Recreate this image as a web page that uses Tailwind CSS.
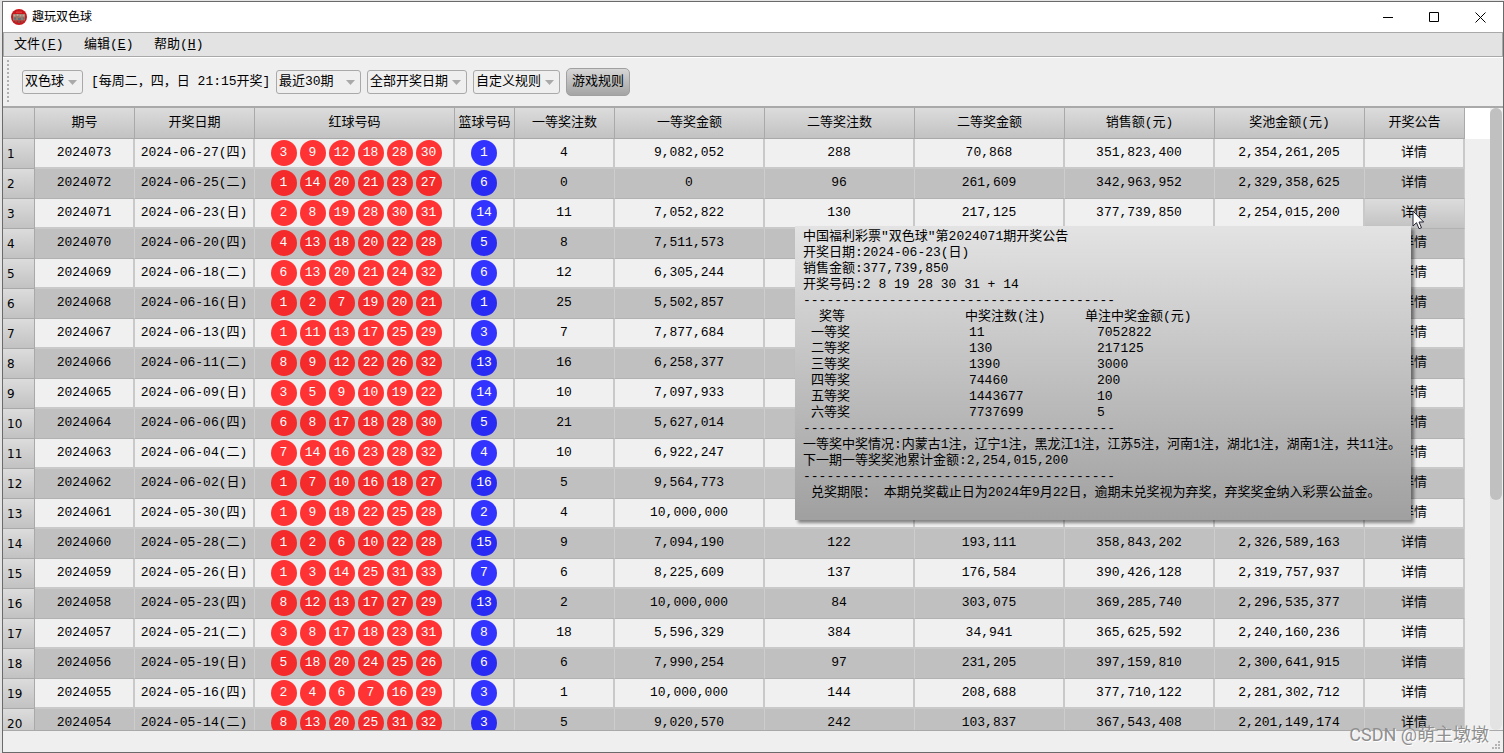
<!DOCTYPE html>
<html lang="zh-CN">
<head>
<meta charset="utf-8">
<title>趣玩双色球</title>
<script src="https://cdn.jsdelivr.net/npm/@tailwindcss/browser@4"></script>
</head>
<body class="h-screen overflow-hidden bg-[#e4e4e4] pt-px pl-0.5 text-[13px] leading-4 text-black font-['Liberation_Mono','Noto_Sans_CJK_SC',monospace]">
<div class="relative flex h-full flex-col border border-[#6a6a6a] bg-[#efefef]">

  <header class="flex h-[30px] shrink-0 items-center bg-white pl-2">
    <svg class="size-4" viewBox="0 0 16 16" aria-hidden="true">
      <circle cx="8" cy="8" r="8" fill="#c9181d"/>
      <path d="M2 5h12v6.500H2z" fill="#97796b"/>
      <path d="M2.500 5.500h2v2h-2zM5.500 5h2v2h-2zM8.500 5.500h2v2h-2zM11.500 5.500h2v2h-2z" fill="#b9a797"/>
      <path d="M3 8.500h2v2H3zM7 9h3v2H7zM12 8.500h1.500v2H12z" fill="#5f7076"/>
      <path d="M4 12h2v1.500H4zM7 12h2v2H7zM10 12h2v1.500h-2z" fill="#8d4a42"/>
      <path d="M5 2.500h6v1.500H5z" fill="#e0393a"/>
    </svg>
    <h1 class="ml-[5px] flex-1 text-xs font-['Liberation_Sans','Noto_Sans_CJK_SC',sans-serif]">趣玩双色球</h1>
    <button aria-label="最小化" class="flex h-full w-[46px] items-center justify-center"><svg width="11" height="11" viewBox="0 0 11 11"><path d="M0 5.500h10" stroke="#000"/></svg></button>
    <button aria-label="最大化" class="flex h-full w-[46px] items-center justify-center"><svg width="11" height="11" viewBox="0 0 11 11"><path d="M.5.5h9v9h-9z" fill="none" stroke="#000"/></svg></button>
    <button aria-label="关闭" class="flex h-full w-[46px] items-center justify-center"><svg width="11" height="11" viewBox="0 0 11 11"><path d="M.5.5l10 10M10.500.5l-10 10" stroke="#000"/></svg></button>
  </header>

  <nav class="flex h-[25px] shrink-0 items-center gap-5 border border-[#a9a9a9] bg-[#e3e3e3] pl-2.5">
    <button class="w-[50px] text-left whitespace-nowrap">文件(<u>F</u>)</button>
    <button class="w-[50px] text-left whitespace-nowrap">编辑(<u>E</u>)</button>
    <button class="w-[50px] text-left whitespace-nowrap">帮助(<u>H</u>)</button>
  </nav>

  <div class="flex h-[49px] shrink-0 items-center border-t border-white pl-1">
    <svg class="mr-[13px]" width="2" height="44" aria-hidden="true"><path d="M1 0v44" stroke="#b0b0b0" stroke-width="2" stroke-dasharray="2 2"/></svg>
    <div class="relative mr-2 w-[61px]">
      <select aria-label="彩种" class="h-6 w-full appearance-none rounded-[3px] border border-[#a9a9a9] bg-[#efefef] pl-0.5"><option>双色球</option></select>
      <svg class="pointer-events-none absolute top-2.5 right-1.5" width="9" height="5" viewBox="0 0 9 5"><path d="M0 0h9L4.500 5z" fill="#a9a9a9"/></svg>
    </div>
    <span class="mr-2 w-[177px] whitespace-nowrap">[每周二，四，日 21:15开奖]</span>
    <div class="relative mr-1.5 w-[85px]">
      <select aria-label="期数" class="h-6 w-full appearance-none rounded-[3px] border border-[#a9a9a9] bg-[#efefef] pl-0.5"><option>最近30期</option></select>
      <svg class="pointer-events-none absolute top-2.5 right-1.5" width="9" height="5" viewBox="0 0 9 5"><path d="M0 0h9L4.500 5z" fill="#a9a9a9"/></svg>
    </div>
    <div class="relative mr-1.5 w-[100px]">
      <select aria-label="开奖日期" class="h-6 w-full appearance-none rounded-[3px] border border-[#a9a9a9] bg-[#efefef] pl-0.5"><option>全部开奖日期</option></select>
      <svg class="pointer-events-none absolute top-2.5 right-1.5" width="9" height="5" viewBox="0 0 9 5"><path d="M0 0h9L4.500 5z" fill="#a9a9a9"/></svg>
    </div>
    <div class="relative mr-1.5 w-[87px]">
      <select aria-label="规则" class="h-6 w-full appearance-none rounded-[3px] border border-[#a9a9a9] bg-[#efefef] pl-0.5"><option>自定义规则</option></select>
      <svg class="pointer-events-none absolute top-2.5 right-1.5" width="9" height="5" viewBox="0 0 9 5"><path d="M0 0h9L4.500 5z" fill="#a9a9a9"/></svg>
    </div>
    <button class="h-7 w-16 rounded-[5px] border border-[#a0a0a0] bg-linear-to-b from-[#d6d6d6] to-[#a4a4a4]">游戏规则</button>
  </div>

  <main class="flex min-h-0 flex-1 border-t-2 border-b border-[#a9a9a9]">
    <div class="min-w-0 flex-1 overflow-hidden">
      <div class="bg-linear-to-b from-white from-[31px] to-[#efefef] to-[31px]">
      <table class="w-[1461px] table-fixed border-separate border-spacing-0 text-center whitespace-nowrap">
        <colgroup><col class="w-8"><col class="w-[100px]"><col class="w-[120px]"><col class="w-[200px]"><col class="w-[60px]"><col class="w-[100px]"><col class="w-[150px]"><col class="w-[150px]"><col class="w-[150px]"><col class="w-[150px]"><col class="w-[150px]"><col class="w-[100px]"></colgroup>
        <thead><tr id="head" class="h-[31px]"></tr></thead>
        <tbody id="rows"></tbody>
      </table>
      </div>
    </div>
    <div class="w-3 shrink-0 rounded-md bg-[#e3e3e3]"><div class="h-[63%] rounded-md bg-[#c0c0c0]"></div></div>
    <div class="w-px shrink-0 bg-[#efefef]"></div>
  </main>

  <footer class="flex h-[21px] shrink-0 items-end justify-end pr-0.5 pb-0.5">
    <svg width="9" height="9" viewBox="0 0 9 9" fill="#b4b4b4" aria-hidden="true"><path d="M6 0h2v2H6zM3 3h2v2H3zM6 3h2v2H6zM0 6h2v2H0zM3 6h2v2H3zM6 6h2v2H6z"/></svg>
  </footer>

  <section role="tooltip" class="absolute top-[224px] left-[792px] w-[616px] bg-linear-to-b from-[#e3e3e3] to-[#a0a0a0] px-2 pt-[3px] pb-[19px] whitespace-nowrap shadow-[3px_3px_3px_rgba(0,0,0,0.45)]">
    <p>中国福利彩票"双色球"第2024071期开奖公告</p>
    <p>开奖日期:2024-06-23(日)</p>
    <p>销售金额:377,739,850</p>
    <p>开奖号码:2 8 19 28 30 31 + 14</p>
    <p>----------------------------------------</p>
    <table class="w-[400px] table-fixed border-separate border-spacing-0 text-left">
      <colgroup><col class="w-[158px]"><col class="w-32"><col></colgroup>
      <thead><tr><th class="p-0 pl-4 font-normal">奖等</th><th class="p-0 pl-1 font-normal">中奖注数(注)</th><th class="p-0 font-normal"><span class="-ml-1">单注中奖金额(元)</span></th></tr></thead>
      <tbody id="prizes"></tbody>
    </table>
    <p>----------------------------------------</p>
    <p>一等奖中奖情况:内蒙古1注，辽宁1注，黑龙江1注，江苏5注，河南1注，湖北1注，湖南1注，共11注。</p>
    <p>下一期一等奖奖池累计金额:2,254,015,200</p>
    <p>----------------------------------------</p>
    <p class="pl-2">兑奖期限： 本期兑奖截止日为2024年9月22日，逾期未兑奖视为弃奖，弃奖奖金纳入彩票公益金。</p>
  </section>

  <svg class="absolute top-[208px] left-[1409px]" width="13" height="20" viewBox="0 0 13 20" aria-hidden="true"><path d="M1 1v15l3.500-3.300 2.500 6 2.500-1-2.500-5.700h4.700z" fill="#fff" stroke="#222232"/></svg>

  <div class="absolute right-3.5 bottom-[3px] text-lg whitespace-nowrap text-[#8f8f8f] [text-shadow:1px_1px_0_#fff] font-['Roboto','Noto_Sans_CJK_SC',sans-serif]">CSDN @萌主墩墩</div>
</div>

<script>
const heads = ['', '期号', '开奖日期', '红球号码', '篮球号码', '一等奖注数', '一等奖金额', '二等奖注数', '二等奖金额', '销售额(元)', '奖池金额(元)', '开奖公告'];
const draws = [
 ['2024073','2024-06-27(四)','3 9 12 18 28 30','1','4','9,082,052','288','70,868','351,823,400','2,354,261,205'],
 ['2024072','2024-06-25(二)','1 14 20 21 23 27','6','0','0','96','261,609','342,963,952','2,329,358,625'],
 ['2024071','2024-06-23(日)','2 8 19 28 30 31','14','11','7,052,822','130','217,125','377,739,850','2,254,015,200'],
 ['2024070','2024-06-20(四)','4 13 18 20 22 28','5','8','7,511,573','','','',''],
 ['2024069','2024-06-18(二)','6 13 20 21 24 32','6','12','6,305,244','','','',''],
 ['2024068','2024-06-16(日)','1 2 7 19 20 21','1','25','5,502,857','','','',''],
 ['2024067','2024-06-13(四)','1 11 13 17 25 29','3','7','7,877,684','','','',''],
 ['2024066','2024-06-11(二)','8 9 12 22 26 32','13','16','6,258,377','','','',''],
 ['2024065','2024-06-09(日)','3 5 9 10 19 22','14','10','7,097,933','','','',''],
 ['2024064','2024-06-06(四)','6 8 17 18 28 30','5','21','5,627,014','','','',''],
 ['2024063','2024-06-04(二)','7 14 16 23 28 32','4','10','6,922,247','','','',''],
 ['2024062','2024-06-02(日)','1 7 10 16 18 27','16','5','9,564,773','','','',''],
 ['2024061','2024-05-30(四)','1 9 18 22 25 28','2','4','10,000,000','','','',''],
 ['2024060','2024-05-28(二)','1 2 6 10 22 28','15','9','7,094,190','122','193,111','358,843,202','2,326,589,163'],
 ['2024059','2024-05-26(日)','1 3 14 25 31 33','7','6','8,225,609','137','176,584','390,426,128','2,319,757,937'],
 ['2024058','2024-05-23(四)','8 12 13 17 27 29','13','2','10,000,000','84','303,075','369,285,740','2,296,535,377'],
 ['2024057','2024-05-21(二)','3 8 17 18 23 31','8','18','5,596,329','384','34,941','365,625,592','2,240,160,236'],
 ['2024056','2024-05-19(日)','5 18 20 24 25 26','6','6','7,990,254','97','231,205','397,159,810','2,300,641,915'],
 ['2024055','2024-05-16(四)','2 4 6 7 16 29','3','1','10,000,000','144','208,688','377,710,122','2,281,302,712'],
 ['2024054','2024-05-14(二)','8 13 20 25 31 32','3','5','9,020,570','242','103,837','367,543,408','2,201,149,174'],
];
const prizes = [['一等奖','11','7052822'],['二等奖','130','217125'],['三等奖','1390','3000'],['四等奖','74460','200'],['五等奖','1443677','10'],['六等奖','7737699','5']];

document.getElementById('head').innerHTML = heads.map(h =>
  `<th scope="col" class="border-r border-b border-[#a9a9a9] bg-linear-to-b from-[#dcdcdc] to-[#c2c2c2] p-0 font-normal">${h}</th>`).join('');

const light = 'border-r-2 border-b-2 border-[#c9c9c9] bg-[#f0f0f0] p-0';
const dark = 'border-r border-b border-r-[#cdcdcd] border-b-[#b2b2b2] bg-[#c0c0c0] p-0 pr-px pb-px';
const hover = 'border-r border-b border-r-[#c9c9c9] border-b-[#b2b2b2] bg-linear-to-b from-[#dcdcdc] to-[#c2c2c2] p-0 pr-px pb-px';
const ball = (n, color) => `<span class="flex size-[26px] items-center justify-center rounded-full text-white ${color}">${n}</span>`;

document.getElementById('rows').innerHTML = draws.map((d, i) => {
  const odd = i % 2 === 1;
  const cell = odd ? dark : light;
  const red = odd ? 'bg-[#f52a2a]' : 'bg-[#ff3333]';
  const blue = odd ? 'bg-[#2a2af5]' : 'bg-[#3333ff]';
  const tds = d.map((v, c) => {
    if (c === 2) v = `<div class="flex justify-center gap-[3px] pl-1">${v.split(' ').map(n => ball(n, red)).join('')}</div>`;
    if (c === 3) v = `<div class="flex justify-center">${ball(v, blue)}</div>`;
    return `<td class="${cell}">${v}</td>`;
  }).join('');
  return `<tr class="h-[30px]"><th scope="row" class="border-r border-b border-[#a9a9a9] bg-linear-to-b from-[#dcdcdc] to-[#c2c2c2] p-0 pl-1 text-left text-xs font-normal font-['DejaVu_Sans',sans-serif]">${i + 1}</th>${tds}<td class="${i === 2 ? hover : cell}"><button>详情</button></td></tr>`;
}).join('');

document.getElementById('prizes').innerHTML = prizes.map(p =>
  `<tr><td class="p-0 pl-2">${p[0]}</td><td class="p-0 pl-2">${p[1]}</td><td class="p-0 pl-2">${p[2]}</td></tr>`).join('');
</script>
</body>
</html>
